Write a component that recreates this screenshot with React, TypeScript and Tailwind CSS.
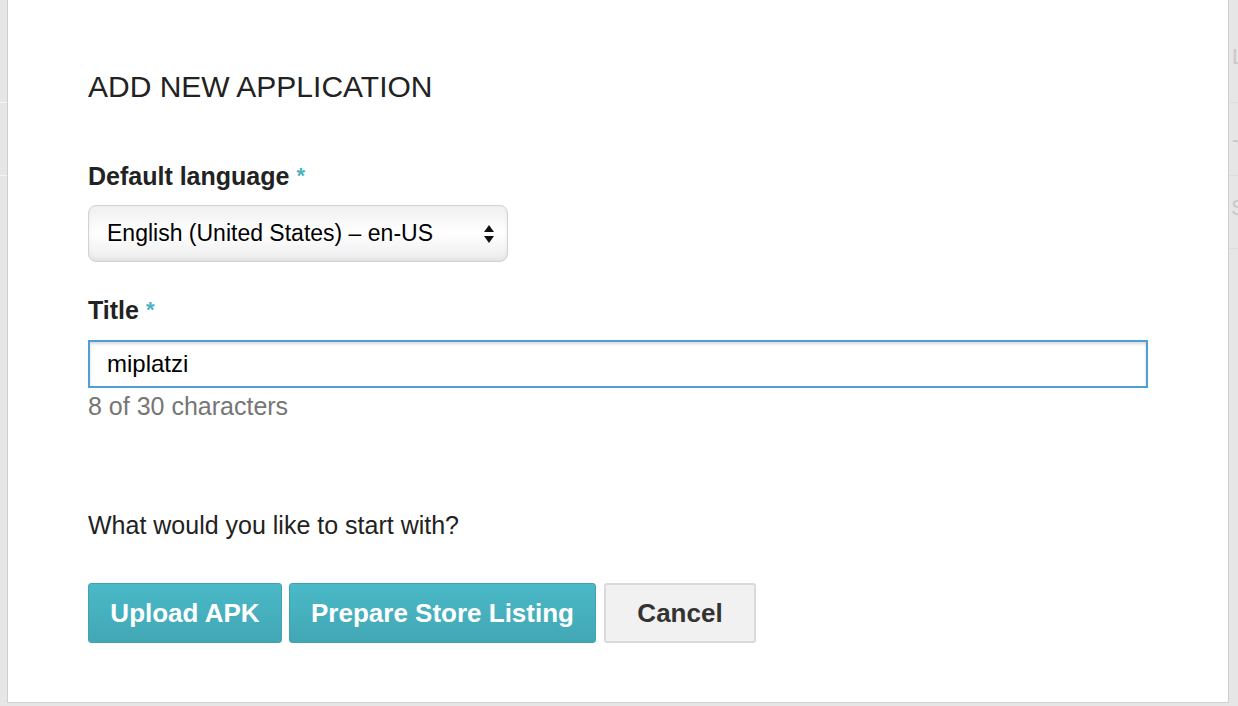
import React from 'react';

export default function App() {
  return (
    <div
      className="w-[1238px] h-[706px] bg-[#e6e6e6] flex overflow-hidden"
      style={{ fontFamily: '"Liberation Sans", Arial, Helvetica, sans-serif' }}
    >
      {/* Left backdrop strip */}
      <div className="w-[7px] flex flex-col shrink-0">
        <div className="h-[103px] border-b border-[#f4f4f4]" />
        <div className="h-[73px] border-b border-[#f4f4f4]" />
      </div>

      {/* Modal */}
      <div className="w-[1222px] h-[703px] bg-white border-l border-r border-b border-[#cfcfcf] shrink-0 pl-[80px] pt-[69px] text-[#222]">
        <h2 className="text-[30px] leading-[36px] font-normal">ADD NEW APPLICATION</h2>

        <label className="block mt-[56px] text-[25px] leading-[30px] font-bold">
          Default language <span className="text-[#4ab3c2] text-[22px] align-top">*</span>
        </label>
        <div className="mt-[14px] w-[420px] h-[57px] rounded-[8px] border border-[#d2d2d2] bg-gradient-to-b from-[#f0f0f0] via-white to-[#ececec] shadow-[inset_0_-2px_4px_rgba(0,0,0,0.06)] flex items-center pl-[18px] pr-[10px]">
          <span className="flex-1 text-[23px] text-black">English (United States) – en-US</span>
          <svg width="12" height="20" viewBox="0 0 12 20" className="mr-[2px]">
            <path d="M6 1 L11 8 L1 8 Z" fill="#111" />
            <path d="M6 19 L11 12 L1 12 Z" fill="#111" />
          </svg>
        </div>

        <label className="block mt-[33px] text-[25px] leading-[30px] font-bold">
          Title <span className="text-[#4ab3c2] text-[22px] align-top">*</span>
        </label>
        <div className="mt-[15px] w-[1060px] h-[48px] border-2 border-[#4f9fd6] bg-white shadow-[inset_0_2px_3px_rgba(0,0,0,0.15)] flex items-center pl-[17px]">
          <span className="text-[24px] text-black">miplatzi</span>
        </div>
        <p className="mt-[3px] text-[25px] leading-[30px] text-[#767676]">8 of 30 characters</p>

        <p className="mt-[89px] text-[25px] leading-[30px] text-[#222]">What would you like to start with?</p>

        <div className="mt-[43px] flex gap-[7px]">
          <button className="h-[60px] w-[194px] rounded-[3px] bg-gradient-to-b from-[#4ab9c8] to-[#42a7b4] border border-[#3fa3b0] text-white text-[26px] font-bold">
            Upload APK
          </button>
          <button className="h-[60px] w-[307px] rounded-[3px] bg-gradient-to-b from-[#4ab9c8] to-[#42a7b4] border border-[#3fa3b0] text-white text-[26px] font-bold">
            Prepare Store Listing
          </button>
          <button className="ml-[1px] h-[60px] w-[152px] rounded-[3px] bg-[#f1f1f1] border-2 border-[#dadada] text-[#333] text-[26px] font-bold">
            Cancel
          </button>
        </div>
      </div>

      {/* Right backdrop strip */}
      <div className="flex-1 flex flex-col text-[#c9c9c9] text-[22px] overflow-hidden">
        <div className="h-[103px] border-b border-[#dcdcdc] pt-[46px] pl-[3px] leading-none">L</div>
        <div className="h-[73px] border-b border-[#dcdcdc] pt-[26px] pl-[3px] leading-none">-</div>
        <div className="h-[73px] border-b border-[#dcdcdc] pt-[21px] pl-[2px] leading-none">S</div>
      </div>
    </div>
  );
}
